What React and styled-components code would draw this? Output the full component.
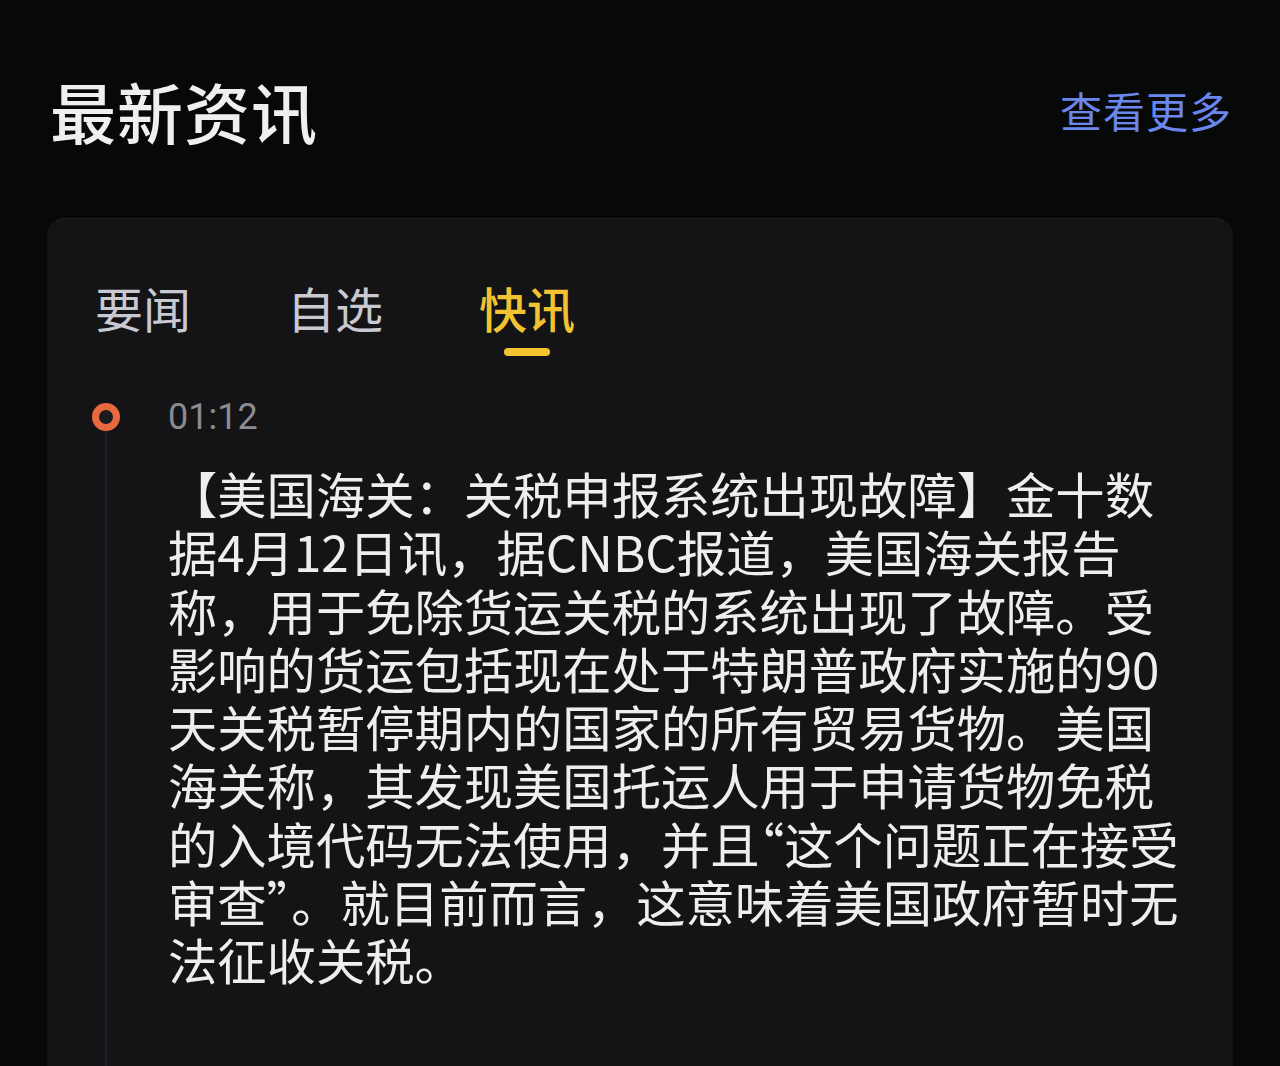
import React, { useState } from "react";
import styled, { createGlobalStyle } from "styled-components";

const GlobalStyle = createGlobalStyle`
  html, body {
    margin: 0;
    padding: 0;
    background: #070909;
  }
  body {
    font-family: "Noto Sans CJK SC", "Noto Sans", sans-serif;
    -webkit-font-smoothing: antialiased;
  }
`;

const tabs = ["要闻", "自选", "快讯"];

// "“" marks where the opening quote gets tightened
const lines = [
  "【美国海关：关税申报系统出现故障】金十数",
  "据4月12日讯，据CNBC报道，美国海关报告",
  "称，用于免除货运关税的系统出现了故障。受",
  "影响的货运包括现在处于特朗普政府实施的90",
  "天关税暂停期内的国家的所有贸易货物。美国",
  "海关称，其发现美国托运人用于申请货物免税",
  "的入境代码无法使用，并且“这个问题正在接受",
  "审查”。就目前而言，这意味着美国政府暂时无",
  "法征收关税。",
];

const renderLine = (text) => {
  const parts = text.split("“");
  if (parts.length === 1) return text;
  return (
    <>
      {parts[0]}
      <Quote>“</Quote>
      {parts[1]}
    </>
  );
};

const App = () => {
  const [active, setActive] = useState(2);

  return (
    <Page>
      <GlobalStyle />
      <Header>
        <Title>最新资讯</Title>
        <MoreLink href="#">查看更多</MoreLink>
      </Header>

      <Card>
        <TabBar>
          {tabs.map((t, i) => (
            <Tab key={t} $active={i === active} onClick={() => setActive(i)}>
              {t}
              <TabMark $active={i === active} />
            </Tab>
          ))}
        </TabBar>

        <FlashItem>
          <Marker>
            <Dot />
            <Rail />
          </Marker>
          <FlashBody>
            <Time>01:12</Time>
            <Content>
              {lines.map((l, i) => (
                <Line key={i}>{renderLine(l)}</Line>
              ))}
            </Content>
          </FlashBody>
        </FlashItem>
      </Card>
    </Page>
  );
};

const Page = styled.div`
  height: 1066px;
  overflow: hidden;
  background: #070909;
`;

const Header = styled.div`
  display: flex;
  justify-content: space-between;
  align-items: center;
  height: 80px;
  padding: 70px 48px 0 50px;
  margin-bottom: 68px;
`;

const Title = styled.h1`
  margin: 0;
  font-size: 66px;
  line-height: 80px;
  font-weight: 500;
  color: #efefef;
  letter-spacing: 1px;
`;

const MoreLink = styled.a`
  font-size: 42px;
  line-height: 60px;
  color: #6b86ec;
  text-decoration: none;
  letter-spacing: 1px;
`;

const Card = styled.div`
  margin: 0 47px;
  min-height: 900px;
  background: #141417;
  border-radius: 18px;
  border-top: 1px solid #1d1f21;
  padding: 58px 0 0 45px;
`;

const TabBar = styled.div`
  display: flex;
  gap: 96px;
  padding-left: 3px;
`;

const Tab = styled.div`
  display: flex;
  flex-direction: column;
  align-items: center;
  font-size: 48px;
  line-height: 60px;
  font-weight: ${(p) => (p.$active ? 500 : 400)};
  color: ${(p) => (p.$active ? "#f2c231" : "#c9c9d1")};
  cursor: pointer;
`;

const TabMark = styled.span`
  width: 46px;
  height: 8px;
  margin-top: 11px;
  border-radius: 4px;
  background: ${(p) => (p.$active ? "#f2c231" : "transparent")};
`;

const FlashItem = styled.div`
  display: flex;
  margin-top: 41px;
`;

const Marker = styled.div`
  display: flex;
  flex-direction: column;
  align-items: center;
  width: 28px;
  padding-top: 6px;
`;

const Dot = styled.span`
  box-sizing: border-box;
  width: 28px;
  height: 28px;
  border-radius: 50%;
  border: 7px solid #e8693c;
  background: #1c1c20;
`;

const Rail = styled.span`
  flex: 1;
  width: 2px;
  min-height: 700px;
  background: #232327;
`;

const FlashBody = styled.div`
  margin-left: 48px;
`;

const Time = styled.div`
  font-family: "Roboto", "Noto Sans CJK SC", sans-serif;
  font-size: 36px;
  line-height: 40px;
  color: #8b8b92;
`;

const Content = styled.div`
  margin-top: 27px;
  font-size: 49.3px;
  line-height: 58.3px;
  color: #eeeeee;
`;

const Line = styled.div`
  white-space: nowrap;
`;

// half-width alternate of the full-width opening quote
const Quote = styled.span`
  font-feature-settings: "halt" 1;
`;

export default App;
